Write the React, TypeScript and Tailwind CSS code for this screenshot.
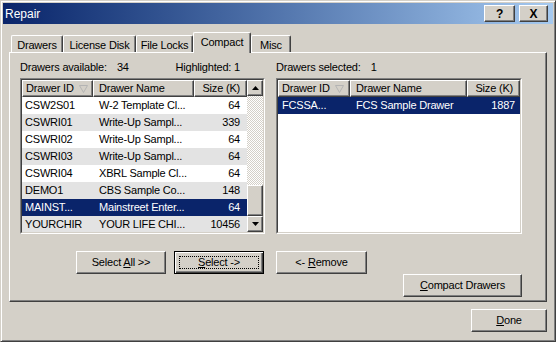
import React from 'react';

const raised =
  'bg-[#d4d0c8] border border-t-white border-l-white border-r-[#404040] border-b-[#404040] shadow-[inset_-1px_-1px_0_#808080]';

const leftRows = [
  ['CSW2S01', 'W-2 Template Cl...', '64'],
  ['CSWRI01', 'Write-Up Sampl...', '339'],
  ['CSWRI02', 'Write-Up Sampl...', '64'],
  ['CSWRI03', 'Write-Up Sampl...', '64'],
  ['CSWRI04', 'XBRL Sample Cl...', '64'],
  ['DEMO1', 'CBS Sample Co...', '148'],
  ['MAINST...', 'Mainstreet Enter...', '64'],
  ['YOURCHIR', 'YOUR LIFE CHI...', '10456'],
];

const SortMark = () => (
  <svg width="9" height="8" viewBox="0 0 9 8" className="ml-[5px]">
    <polygon points="0.5,0.5 8.5,0.5 4.5,7.5" fill="none" stroke="#b4b4b4" strokeWidth="1" />
  </svg>
);

const HeaderCell = ({ w, children, right, first }: { w: string; children: React.ReactNode; right?: boolean; first?: boolean }) => (
  <div
    className={`${w} h-[17px] shrink-0 flex items-center ${raised} ${right ? 'justify-end pr-[6px]' : first ? 'pl-[3px]' : 'pl-[5px]'}`}
  >
    {children}
  </div>
);

const Tab = ({ w, active, children }: { w: string; active?: boolean; children: React.ReactNode }) =>
  active ? (
    <div className={`${w} h-[21px] -mb-[1px] relative z-10 bg-[#d4d0c8] border-t border-l border-white border-r border-r-[#404040] shadow-[inset_-1px_0_0_#808080] rounded-t-[2px] flex justify-center pt-[1px]`}>
      {children}
    </div>
  ) : (
    <div className={`${w} h-[17px] bg-[#d4d0c8] border-t border-l border-white border-r border-r-[#404040] shadow-[inset_-1px_0_0_#808080] rounded-t-[2px] flex justify-center pt-[1px]`}>
      {children}
    </div>
  );

const Btn = ({ w, children, def }: { w: string; children: React.ReactNode; def?: boolean }) =>
  def ? (
    <div className={`${w} h-[23px] relative border border-black bg-[#d4d0c8] shadow-[inset_1px_1px_0_#fff,inset_-1px_-1px_0_#404040,inset_-2px_-2px_0_#808080] flex items-center justify-center`}>
      <span className="absolute inset-[4px] border border-dotted border-black" />
      {children}
    </div>
  ) : (
    <div className={`${w} h-[23px] ${raised} flex items-center justify-center`}>{children}</div>
  );

const ScrollBtn = ({ up }: { up?: boolean }) => (
  <div className={`h-[16px] w-[16px] ${raised} flex items-center justify-center`}>
    <svg width="7" height="4" viewBox="0 0 7 4">
      {up ? <polygon points="3.5,0 7,4 0,4" fill="#000" /> : <polygon points="0,0 7,0 3.5,4" fill="#000" />}
    </svg>
  </div>
);

const Sunken = ({ w, children }: { w: string; children: React.ReactNode }) => (
  <div className={`${w} h-[156px] border border-t-[#808080] border-l-[#808080] border-r-white border-b-white`}>
    <div className="h-full border border-t-[#404040] border-l-[#404040] border-r-[#d4d0c8] border-b-[#d4d0c8] bg-white overflow-hidden">
      {children}
    </div>
  </div>
);

export default function App() {
  return (
    <div className="w-[556px] h-[342px] bg-[#d4d0c8] border border-t-[#d4d0c8] border-l-[#d4d0c8] border-r-[#404040] border-b-[#404040] shadow-[inset_1px_1px_0_#fff,inset_-1px_-1px_0_#808080] p-[2px] font-['Liberation_Sans',Arial,sans-serif] text-[11px] tracking-[-0.2px] text-black overflow-hidden">
      {/* Title bar */}
      <div className="h-[21px] bg-linear-to-r from-[#0a246a] to-[#a6caf0] flex items-center pl-[2px] pr-[5px]">
        <span className="text-white text-[12px] tracking-normal">Repair</span>
        <div className="ml-auto flex gap-[4px]">
          <div className={`w-[31px] h-[17px] ${raised} flex items-center justify-center font-bold text-[12px] leading-none`}>?</div>
          <div className={`w-[29px] h-[17px] ${raised} flex items-center justify-center font-bold text-[12px] leading-none`}>X</div>
        </div>
      </div>

      {/* Tabs */}
      <div className="flex items-end h-[20px] mt-[8px] ml-[8px]">
        <Tab w="w-[52px]">Drawers</Tab>
        <Tab w="w-[73px]">License Disk</Tab>
        <Tab w="w-[57px]">File Locks</Tab>
        <Tab w="w-[58px]" active>Compact</Tab>
        <Tab w="w-[40px]">Misc</Tab>
      </div>

      {/* Tab panel */}
      <div className="ml-[6px] w-[538px] h-[250px] border border-t-white border-l-white border-r-[#404040] border-b-[#404040] shadow-[inset_-1px_-1px_0_#808080] pl-[10px] pt-[8px]">
        <div className="w-[502px]">
          <div className="flex gap-[11px]">
            {/* Left column */}
            <div className="w-[245px]">
              <div className="h-[17px] leading-[13px] flex">
                <span>Drawers available:</span>
                <span className="ml-[10px]">34</span>
                <span className="ml-auto mr-[25px]">Highlighted: 1</span>
              </div>
              <Sunken w="w-[245px]">
                <div className="flex">
                  <div className="w-[225px]">
                    <div className="flex">
                      <HeaderCell w="w-[71px]" first>
                        Drawer ID
                        <SortMark />
                      </HeaderCell>
                      <HeaderCell w="w-[101px]">Drawer Name</HeaderCell>
                      <HeaderCell w="w-[53px]" right>Size (K)</HeaderCell>
                    </div>
                    {leftRows.map((r, i) => {
                      const sel = i === 6;
                      const bg = sel ? 'bg-[#0a246a] text-white' : i % 2 === 1 ? 'bg-[#e3e3e3]' : 'bg-white';
                      return (
                        <div key={r[0]} className={`flex h-[17px] items-center ${bg}`}>
                          <div className="w-[71px] pl-[3px] whitespace-nowrap">{r[0]}</div>
                          <div className="w-[101px] pl-[6px] whitespace-nowrap overflow-hidden">{r[1]}</div>
                          <div className="w-[53px] pr-[7px] text-right">{r[2]}</div>
                        </div>
                      );
                    })}
                  </div>
                  {/* Scrollbar */}
                  <div className="w-[16px] h-[152px] flex flex-col">
                    <ScrollBtn up />
                    <div className="flex-1 flex flex-col justify-end [background-image:repeating-conic-gradient(#d4d0c8_0_25%,#ffffff_0_50%)] [background-size:2px_2px]">
                      <div className={`h-[31px] ${raised}`} />
                    </div>
                    <ScrollBtn />
                  </div>
                </div>
              </Sunken>
            </div>

            {/* Right column */}
            <div className="w-[246px]">
              <div className="h-[17px] leading-[13px] flex">
                <span>Drawers selected:</span>
                <span className="ml-[10px]">1</span>
              </div>
              <Sunken w="w-[246px]">
                <div className="flex">
                  <HeaderCell w="w-[72px]" first>
                    Drawer ID
                    <SortMark />
                  </HeaderCell>
                  <HeaderCell w="w-[117px]">Drawer Name</HeaderCell>
                  <HeaderCell w="w-[53px]" right>Size (K)</HeaderCell>
                </div>
                <div className="flex h-[17px] items-center bg-[#0a246a] text-white">
                  <div className="w-[72px] pl-[4px]">FCSSA...</div>
                  <div className="w-[117px] pl-[6px]">FCS Sample Drawer</div>
                  <div className="w-[53px] pr-[5px] text-right">1887</div>
                </div>
              </Sunken>
            </div>
          </div>

          {/* Buttons row */}
          <div className="flex mt-[17px]">
            <div className="ml-[56px]">
              <Btn w="w-[90px]">
                <span>
                  Select <u>A</u>ll &gt;&gt;
                </span>
              </Btn>
            </div>
            <div className="ml-[8px]">
              <Btn w="w-[90px]" def>
                <span>
                  <u>S</u>elect -&gt;
                </span>
              </Btn>
            </div>
            <div className="ml-[12px]">
              <Btn w="w-[91px]">
                <span>
                  &lt;- <u>R</u>emove
                </span>
              </Btn>
            </div>
          </div>

          <div className="flex justify-end">
            <Btn w="w-[119px]">
              <span>
                <u>C</u>ompact Drawers
              </span>
            </Btn>
          </div>
        </div>
      </div>

      {/* Bottom */}
      <div className="ml-[6px] w-[538px] flex justify-end mt-[7px]">
        <Btn w="w-[76px]">
          <span>
            <u>D</u>one
          </span>
        </Btn>
      </div>
    </div>
  );
}
